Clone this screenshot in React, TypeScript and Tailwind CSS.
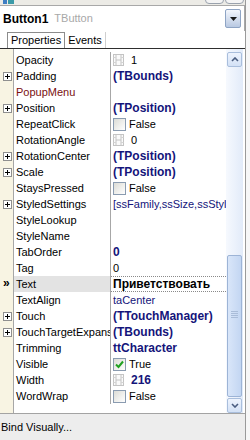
import type { ReactNode } from 'react'

type Prop = {
  name: string
  value?: ReactNode
  plus?: boolean
  nameColor?: string
  selected?: boolean
}

const navyBold = 'font-bold text-[12px] text-[#14147a]'

function Film() {
  return (
    <svg width="11" height="12" viewBox="0 0 11 12" className="shrink-0">
      <rect x="0.5" y="0.5" width="10" height="11" fill="#fafafa" stroke="#c4c4c4" />
      <line x1="3" y1="0.5" x2="3" y2="11.5" stroke="#c4c4c4" />
      <line x1="8" y1="0.5" x2="8" y2="11.5" stroke="#c4c4c4" />
      <line x1="3" y1="6" x2="8" y2="6" stroke="#c4c4c4" />
      <line x1="0.5" y1="3.5" x2="3" y2="3.5" stroke="#d4d4d4" />
      <line x1="0.5" y1="8.5" x2="3" y2="8.5" stroke="#d4d4d4" />
      <line x1="8" y1="3.5" x2="10.5" y2="3.5" stroke="#d4d4d4" />
      <line x1="8" y1="8.5" x2="10.5" y2="8.5" stroke="#d4d4d4" />
    </svg>
  )
}

function Check({ checked }: { checked?: boolean }) {
  return (
    <span className="w-[13px] h-[13px] shrink-0 border border-[#8a9bb0] bg-gradient-to-br from-[#dcdcd6] to-[#ffffff] flex items-center justify-center">
      {checked && (
        <svg width="9" height="9" viewBox="0 0 9 9">
          <path d="M1 4.5 L3.5 7 L8 1.5" fill="none" stroke="#21a121" strokeWidth="2" />
        </svg>
      )}
    </span>
  )
}

function PlusBox() {
  return (
    <span className="w-[9px] h-[9px] border border-[#8f8f8f] bg-white flex items-center justify-center">
      <svg width="7" height="7" viewBox="0 0 7 7">
        <line x1="1" y1="3.5" x2="6" y2="3.5" stroke="#000" />
        <line x1="3.5" y1="1" x2="3.5" y2="6" stroke="#000" />
      </svg>
    </span>
  )
}

const props: Prop[] = [
  { name: 'Opacity', value: <><Film /><span className="ml-[7px]">1</span></> },
  { name: 'Padding', plus: true, value: <span className={navyBold}>(TBounds)</span> },
  { name: 'PopupMenu', nameColor: 'text-[#7a1010]' },
  { name: 'Position', plus: true, value: <span className={navyBold}>(TPosition)</span> },
  { name: 'RepeatClick', value: <><Check /><span className="ml-[3px]">False</span></> },
  { name: 'RotationAngle', value: <><Film /><span className="ml-[7px]">0</span></> },
  { name: 'RotationCenter', plus: true, value: <span className={navyBold}>(TPosition)</span> },
  { name: 'Scale', plus: true, value: <span className={navyBold}>(TPosition)</span> },
  { name: 'StaysPressed', value: <><Check /><span className="ml-[3px]">False</span></> },
  { name: 'StyledSettings', plus: true, value: <span className="text-[#14147a]">[ssFamily,ssSize,ssStyle</span> },
  { name: 'StyleLookup' },
  { name: 'StyleName' },
  { name: 'TabOrder', value: <span className={navyBold}>0</span> },
  { name: 'Tag', value: <span>0</span> },
  { name: 'Text', selected: true, value: <span className="font-bold text-[12px] text-black">Приветствовать</span> },
  { name: 'TextAlign', value: <span className="text-[#14147a]">taCenter</span> },
  { name: 'Touch', plus: true, value: <span className={navyBold}>(TTouchManager)</span> },
  { name: 'TouchTargetExpans', plus: true, value: <span className={navyBold}>(TBounds)</span> },
  { name: 'Trimming', value: <span className={navyBold}>ttCharacter</span> },
  { name: 'Visible', value: <><Check checked /><span className="ml-[3px]">True</span></> },
  { name: 'Width', value: <><Film /><span className={`ml-[7px] ${navyBold}`}>216</span></> },
  { name: 'WordWrap', value: <><Check /><span className="ml-[3px]">False</span></> },
]

function Row({ p }: { p: Prop }) {
  return (
    <div className="flex h-[16px]">
      <div className="w-[14px] shrink-0 bg-[#f8f4e3] border-r border-[#a7a7a7] flex items-center pl-[3px]">
        {p.plus && <PlusBox />}
        {p.selected && <span className="font-bold text-[12px] leading-none -mt-[2px]">»</span>}
      </div>
      <div
        className={`w-[97px] shrink-0 border-r border-[#a7a7a7] pl-[2px] flex items-center overflow-hidden whitespace-nowrap ${
          p.selected ? 'bg-[#e3e3e3]' : ''
        } ${p.nameColor ?? 'text-black'}`}
      >
        {p.name}
      </div>
      <div
        className={`flex-1 min-w-0 pl-[2px] flex items-center overflow-hidden whitespace-nowrap ${
          p.selected ? 'border-y border-dotted border-[#8a8a8a]' : ''
        }`}
      >
        {p.value}
      </div>
    </div>
  )
}

function Chevron({ down }: { down?: boolean }) {
  return (
    <svg width="8" height="5" viewBox="0 0 8 5">
      <path d={down ? 'M1 1 L4 4 L7 1' : 'M1 4 L4 1 L7 4'} fill="none" stroke="#4a5d80" strokeWidth="1.6" />
    </svg>
  )
}

function ScrollButton({ down }: { down?: boolean }) {
  return (
    <div className="h-[15px] mx-[1px] rounded-[2px] border border-[#a9bedc] bg-gradient-to-b from-[#eef4fd] to-[#d3e1f6] flex items-center justify-center">
      <Chevron down={down} />
    </div>
  )
}

export default function App() {
  return (
    <div
      className="w-[250px] h-[440px] bg-[#f4f4f4] flex text-[11px] text-black overflow-hidden"
      style={{ fontFamily: '"Liberation Sans", Arial, sans-serif' }}
    >
      <div className="w-[246px] shrink-0 flex flex-col border-r border-[#9a9a9a]">
        {/* toolbar strip, mostly cut off */}
        <div className="h-[5px] bg-[#ecebe6] flex items-end relative">
          <span className="absolute left-[3px] top-0 w-[4px] h-[4px] bg-[#3f7fc4]" />
          <span className="absolute left-[8px] top-0 w-[6px] h-[4px] bg-[#3b9aa8]" />
          <span className="absolute left-[205px] -top-[6px] w-[19px] h-[10px] rounded-[4px] border border-[#9aa2ad] bg-[#f4f4f4]" />
          <span className="absolute left-[225px] -top-[6px] w-[19px] h-[10px] rounded-[4px] border border-[#9aa2ad] bg-[#f4f4f4]" />
        </div>

        {/* component selector */}
        <div className="h-[26px] bg-white border-t border-r border-[#a8a8a8] flex items-center pl-[3px] pr-[3px]">
          <span className="font-bold text-[12px]">Button1</span>
          <span className="ml-[6px] text-[#a8a8a8]">TButton</span>
          <div className="ml-auto w-[16px] h-[19px] rounded-[2px] border border-[#8ea4c4] bg-gradient-to-b from-[#f4f7fc] to-[#b9c9e2] flex items-center justify-center">
            <svg width="7" height="4" viewBox="0 0 7 4">
              <path d="M0 0 H7 L3.5 4 Z" fill="#1a1a1a" />
            </svg>
          </div>
        </div>

        {/* tabs */}
        <div className="h-[18px] bg-white border-b border-[#2e2e2e] flex items-end pl-[7px]">
          <div className="h-[16px] px-[3px] border border-b-0 border-[#8c8c8c] flex items-center">Properties</div>
          <div className="h-[16px] px-[3px] flex items-center border-r border-[#cfcfcf]">Events</div>
        </div>

        {/* property grid */}
        <div className="h-[364px] bg-white flex">
          <div className="w-[226px] shrink-0 flex flex-col">
            <div className="h-[3px] flex">
              <div className="w-[14px] bg-[#f8f4e3] border-r border-[#a7a7a7]" />
            </div>
            {props.map((p) => (
              <Row key={p.name} p={p} />
            ))}
            <div className="flex-1 flex">
              <div className="w-[14px] bg-[#f8f4e3] border-r border-[#a7a7a7]" />
            </div>
          </div>
          <div className="w-[17px] shrink-0 bg-gradient-to-r from-[#f6f9fe] to-[#e2ebf9] pt-[3px] flex flex-col">
            <ScrollButton />
            <div className="h-[188px]" />
            <div className="h-[142px] mx-[1px] rounded-[2px] border border-[#9db4d6] bg-gradient-to-r from-[#d9e6f9] to-[#c3d6f2] flex items-center justify-center">
              <div className="flex flex-col gap-[1px] -mt-[24px]">
                <span className="w-[7px] h-px bg-[#a9bcd8]" />
                <span className="w-[7px] h-px bg-[#a9bcd8]" />
                <span className="w-[7px] h-px bg-[#a9bcd8]" />
                <span className="w-[7px] h-px bg-[#a9bcd8]" />
              </div>
            </div>
            <div className="h-[1px]" />
            <ScrollButton down />
          </div>
          <div className="flex-1 bg-white" />
        </div>

        {/* footer */}
        <div className="flex-1 bg-[#ededed] border-t border-[#a3a3a3] pl-[1px] pt-[5px]">Bind Visually...</div>
      </div>
      <div className="flex-1 bg-[#f7f7f7]" />
    </div>
  )
}
